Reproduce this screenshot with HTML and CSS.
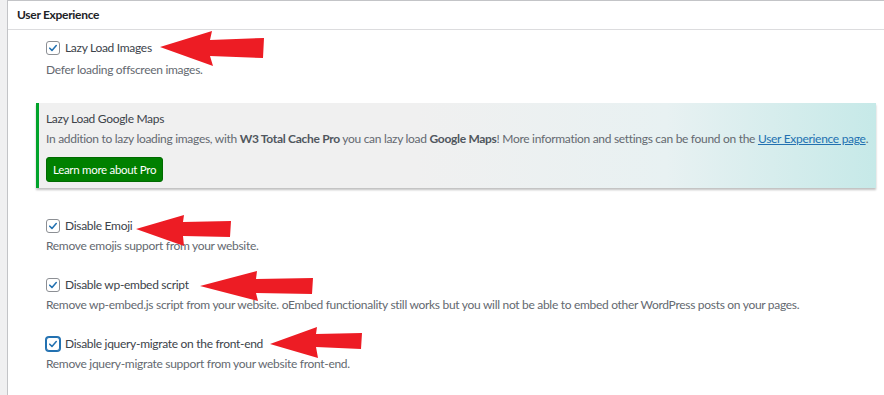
FILE: index.html
```html
<!DOCTYPE html>
<html lang="en">
<head>
    <meta charset="UTF-8">
    <meta name="viewport" content="width=device-width, initial-scale=1.0">
    <title>User Experience</title>
    <link rel="stylesheet" href="styles.css">
</head>
<body>

<div class="postbox">
    <h2 class="hndle">User Experience</h2>

    <div class="inside">
        <div class="option first">
            <label class="option-label">
                <span class="check">
                    <svg viewBox="0 0 14 14" width="14" height="14"><path d="M3.2 7.2 L5.8 9.8 L10.8 4.2" fill="none" stroke="#2271b1" stroke-width="1.8" stroke-linecap="round" stroke-linejoin="round"/></svg>
                </span>
                Lazy Load Images
            </label>
            <p class="description">Defer loading offscreen images.</p>
        </div>

        <div class="notice">
            <p class="notice-title">Lazy Load Google Maps</p>
            <p class="notice-text">In addition to lazy loading images, with <strong>W3 Total Cache Pro</strong> you can lazy load <strong>Google Maps</strong>! More information and settings can be found on the <a href="#">User Experience page</a>.</p>
            <button class="btn-pro">Learn more about Pro</button>
        </div>

        <div class="option">
            <label class="option-label">
                <span class="check">
                    <svg viewBox="0 0 14 14" width="14" height="14"><path d="M3.2 7.2 L5.8 9.8 L10.8 4.2" fill="none" stroke="#2271b1" stroke-width="1.8" stroke-linecap="round" stroke-linejoin="round"/></svg>
                </span>
                Disable Emoji
            </label>
            <p class="description">Remove emojis support from your website.</p>
        </div>

        <div class="option">
            <label class="option-label">
                <span class="check">
                    <svg viewBox="0 0 14 14" width="14" height="14"><path d="M3.2 7.2 L5.8 9.8 L10.8 4.2" fill="none" stroke="#2271b1" stroke-width="1.8" stroke-linecap="round" stroke-linejoin="round"/></svg>
                </span>
                Disable wp-embed script
            </label>
            <p class="description">Remove wp-embed.js script from your website. oEmbed functionality still works but you will not be able to embed other WordPress posts on your pages.</p>
        </div>

        <div class="option">
            <label class="option-label">
                <span class="check focused">
                    <svg viewBox="0 0 14 14" width="14" height="14"><path d="M3.2 7.2 L5.8 9.8 L10.8 4.2" fill="none" stroke="#2271b1" stroke-width="1.8" stroke-linecap="round" stroke-linejoin="round"/></svg>
                </span>
                Disable jquery-migrate on the front-end
            </label>
            <p class="description">Remove jquery-migrate support from your website front-end.</p>
        </div>
    </div>
</div>

<!-- red annotation arrows drawn over the screenshot -->
<svg class="marks" viewBox="0 0 884 395" width="884" height="395">
    <polygon points="160,47 212,31 210,40 264,38 263,58 210,56 213,66" />
    <polygon points="136,229 184,215 183,222 231,221 230,237 183,236 184,246" />
    <polygon points="200,286 257,271 256,279 313,278 312,294 256,293 258,301" />
    <polygon points="270,344 317,327 316,334 362,333 361,349 316,347 318,358" />
</svg>

</body>
</html>
```

FILE: styles.css
```css
* {
    margin: 0;
    padding: 0;
    box-sizing: border-box;
}

body {
    font-family: Lato, "Open Sans", sans-serif;
    font-size: 12px;
    letter-spacing: -0.3px;
    color: #3c434a;
    background-color: #f0f0f1;
    height: 395px;
    overflow: hidden;
    position: relative;
}

.postbox {
    margin-left: 7px;
    width: 900px;
    min-height: 400px;
    background: #fff;
    border: 1px solid #c3c4c7;
    border-right: none;
}

.hndle {
    font-size: 12px;
    font-weight: 700;
    color: #1d2327;
    line-height: 28px;
    padding: 0 9px;
    border-bottom: 1px solid #dcdcde;
}

.inside {
    padding: 0 0 0 28px;
}

.option {
    padding-left: 10px;
    margin-top: 28px;
}

.option.first {
    margin-top: 8px;
}

.option + .option {
    margin-top: 20px;
}

.option-label {
    display: flex;
    align-items: center;
    line-height: 20px;
    gap: 5px;
    color: #3c434a;
}

.check {
    width: 14px;
    height: 14px;
    border: 1px solid #8c8f94;
    border-radius: 3px;
    display: flex;
    align-items: center;
    justify-content: center;
    background: #fff;
}

.check svg {
    display: block;
}

.check.focused {
    border-color: #2271b1;
    box-shadow: 0 0 0 1px #2271b1;
}

.description {
    color: #646970;
    line-height: 19px;
}

.option.first .description {
    margin-top: 2px;
}

.notice {
    margin-top: 24px;
    width: 840px;
    padding: 6px 4px 6px 7px;
    border-left: 3px solid #00a32a;
    background: linear-gradient(to right, #f0f0f0 0%, #f0f0f0 45%, #e8f1f2 75%, #c6e9e8 100%);
    box-shadow: 0 2px 2px rgba(0, 0, 0, 0.25);
}

.notice-title {
    line-height: 20px;
    color: #3c434a;
}

.notice-text {
    line-height: 20px;
    color: #646970;
    white-space: nowrap;
}

.notice-text strong {
    color: #50575e;
}

.notice-text a {
    color: #2271b1;
}

.btn-pro {
    margin-top: 8px;
    height: 25px;
    padding: 0 6px;
    background-color: #008000;
    color: #fff;
    border: 1px solid #006b00;
    border-radius: 3px;
    font-family: inherit;
    font-size: 11.5px;
    letter-spacing: -0.3px;
    cursor: pointer;
}

.marks {
    position: absolute;
    top: 0;
    left: 0;
    pointer-events: none;
}

.marks polygon {
    fill: #ed1c24;
}
```
